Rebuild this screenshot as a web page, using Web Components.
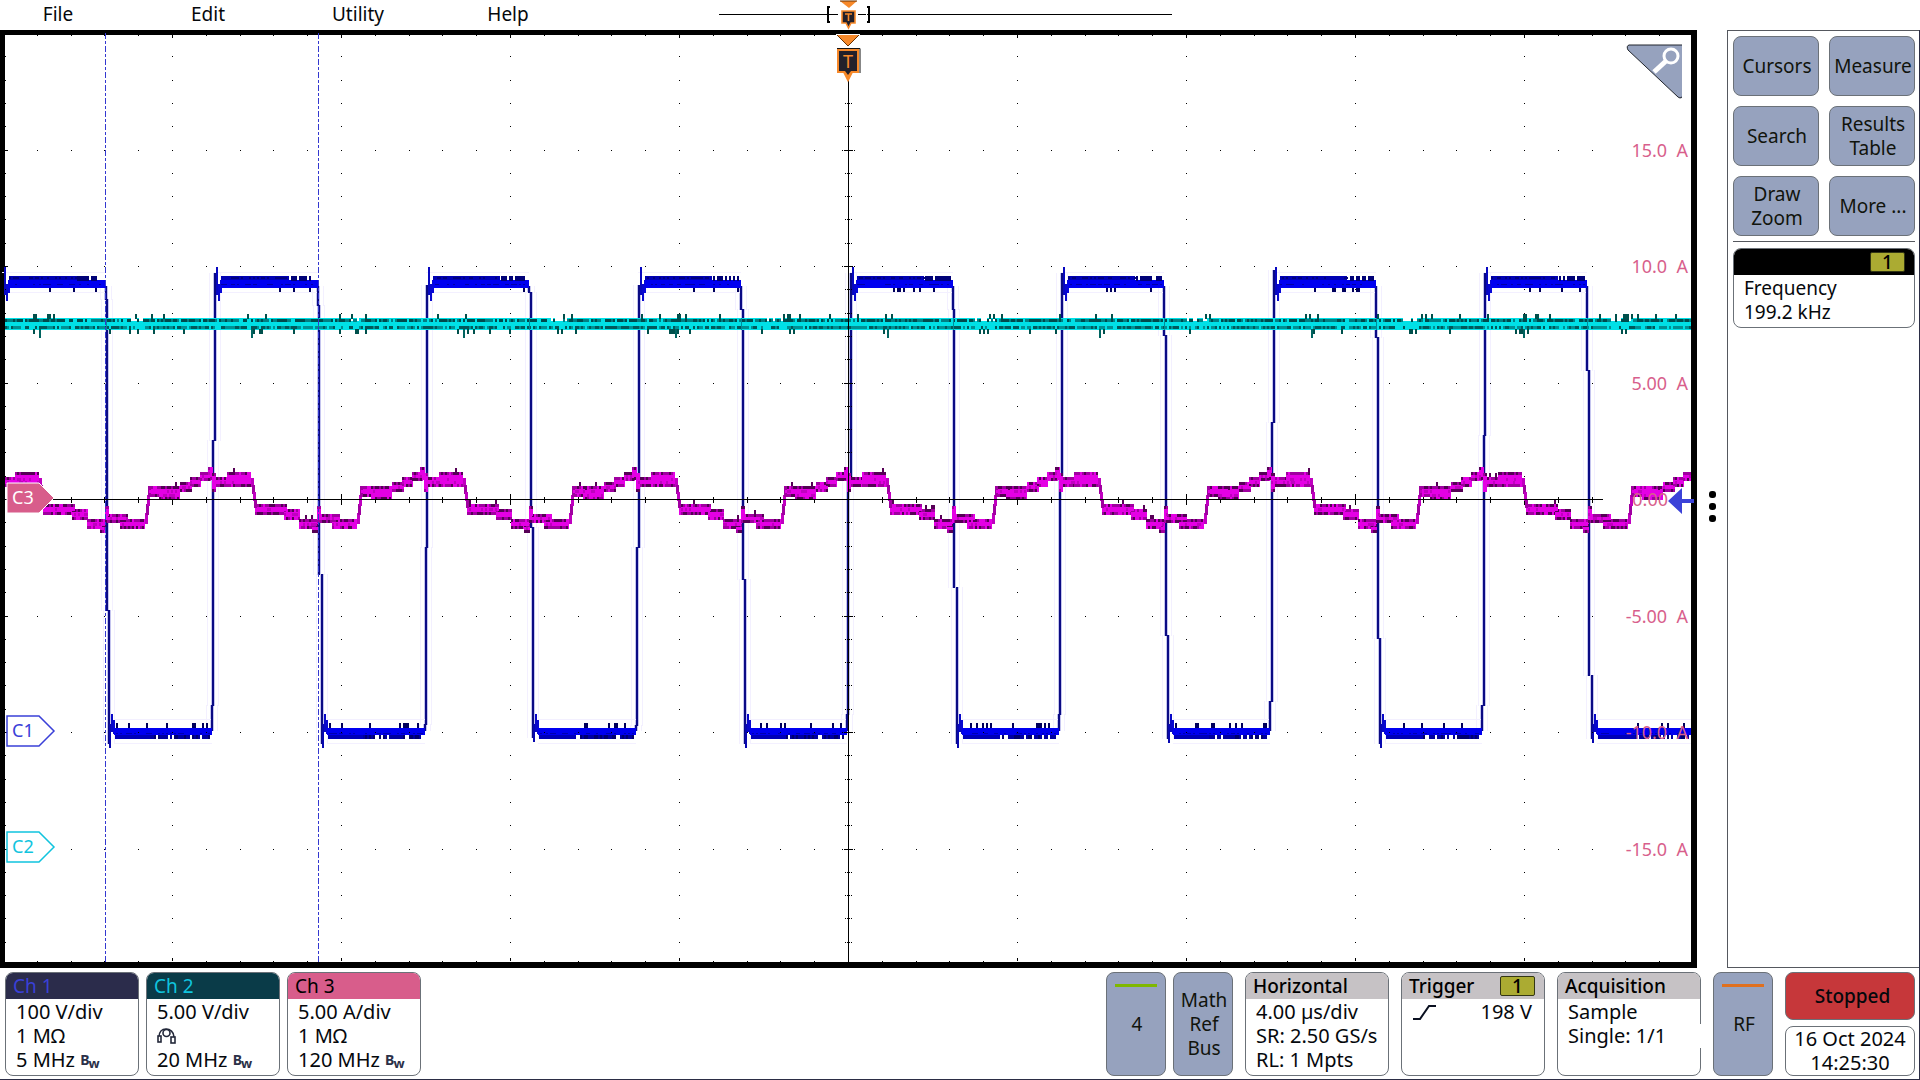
<!DOCTYPE html>
<html lang="en">
<head>
<meta charset="utf-8">
<title>Oscilloscope</title>
<style>
html,body{margin:0;height:100%;background:#fff}
body{font-family:"Noto Sans",sans-serif;font-size:20px;line-height:24px;color:#05080c}
</style>
</head>
<body>
<scope-app>
  <scope-menu slot="menu"></scope-menu>
  <scope-plot slot="plot"></scope-plot>
  <scope-panel slot="panel">
    <tool-button>Cursors</tool-button>
    <tool-button>Measure</tool-button>
    <tool-button>Search</tool-button>
    <tool-button>Results<br>Table</tool-button>
    <tool-button>Draw<br>Zoom</tool-button>
    <tool-button>More ...</tool-button>
    <info-badge slot="cards" style="--head:#000;--narrow:19px"><source-chip slot="chip">1</source-chip><div>Frequency</div><div>199.2 kHz</div></info-badge>
  </scope-panel>
  <info-badge slot="channels" style="--head:#2b2c4b;--title:#3a40d8"><span slot="title">Ch 1</span><div>100 V/div</div><div>1 MΩ</div><div>5 MHz <bw-mark></bw-mark></div></info-badge>
  <info-badge slot="channels" style="--head:#0a3b48;--title:#10c4de"><span slot="title">Ch 2</span><div>5.00 V/div</div><div><probe-icon></probe-icon></div><div>20 MHz <bw-mark></bw-mark></div></info-badge>
  <info-badge slot="channels" style="--head:#d85d8b"><span slot="title">Ch 3</span><div>5.00 A/div</div><div>1 MΩ</div><div>120 MHz <bw-mark></bw-mark></div></info-badge>
  <add-button slot="adders" color="#7fb800">4</add-button>
  <add-button slot="adders">Math Ref Bus</add-button>
  <info-badge slot="status" style="--head:#c6c2c5;--weight:500"><span slot="title">Horizontal</span><div>4.00 µs/div</div><div>SR: 2.50 GS/s</div><div>RL: 1 Mpts</div></info-badge>
  <info-badge slot="status" style="--head:#c6c2c5;--weight:500"><span slot="title">Trigger</span><source-chip slot="chip">1</source-chip><slope-row>198 V</slope-row></info-badge>
  <info-badge slot="status" style="--head:#c6c2c5;--weight:500" class="notched"><span slot="title">Acquisition</span><div>Sample</div><div>Single: 1/1</div></info-badge>
  <add-button slot="rf" color="#e0701e">RF</add-button>
  <run-state slot="clock"><span>16 Oct 2024</span><span slot="time">14:25:30</span></run-state>
</scope-app>
<script>
const define = (name, html, setup) => {
  const tpl = document.createElement('template');
  tpl.innerHTML = html;
  customElements.define(name, class extends HTMLElement {
    constructor() {
      super();
      this.attachShadow({mode: 'open'}).appendChild(tpl.content.cloneNode(true));
    }
    connectedCallback() { if (setup) setup(this, this.shadowRoot); }
  });
};

define('scope-app', `
<style>
:host{display:flex;flex-direction:column;min-height:100vh;box-sizing:border-box;border-bottom:1px solid #2b2d45}
main{flex:1;display:flex;border-right:1px solid #2b2d45;min-height:400px}
.plot{flex:1;display:flex;min-width:0}
.more{width:30px;display:flex;flex-direction:column;align-items:center;justify-content:center;gap:5px;background:none;border:0;padding:15px 0 0}
.more i{width:7px;height:7px;border-radius:3px;background:#000}
.panel{display:flex;width:192px}
footer{display:flex;padding:4px 4px 3px 5px;height:104px;border-right:1px solid #2b2d45}
.ch,.add{display:flex;gap:7px}
.add{margin-left:auto}
.st{display:flex;gap:12px;margin:0 12px}
.ch{--w:134px}.st{--w:144px}
.clock{display:flex;margin-left:12px}
::slotted(scope-plot),::slotted(scope-panel){flex:1;min-width:0}
</style>
<slot name="menu"></slot>
<main><div class="plot"><slot name="plot"></slot></div>
<button class="more" aria-label="Panel handle"><i></i><i></i><i></i></button>
<div class="panel"><slot name="panel"></slot></div></main>
<footer><div class="ch"><slot name="channels"></slot></div><div class="add"><slot name="adders"></slot></div>
<div class="st"><slot name="status"></slot></div><slot name="rf"></slot><div class="clock"><slot name="clock"></slot></div></footer>`);

define('scope-menu', `
<style>
:host{display:flex;height:30px}
nav{display:flex;align-items:flex-start;margin-left:-17px}
button{width:150px;height:28px;padding:0;border:0;background:none;font:inherit;font-size:19px;line-height:28px;color:inherit}
svg{display:block;margin-left:136px}
</style>
<nav><button>File</button><button>Edit</button><button>Utility</button><button>Help</button></nav>
<svg width="453" height="30" viewBox="719 0 453 30">
<rect x="719" y="14" width="453" height="1" shape-rendering="crispEdges"/>
<rect x="830" y="12" width="37" height="5" fill="#fff"/><rect x="830" y="14" width="8" height="1"/><rect x="858" y="14" width="8" height="1"/>
<path d="M830 7h-2v15h2M867 7h2v15h-2" fill="none" stroke="#000" stroke-width="2"/>
<path d="M840 1h17l-8 7z" fill="#f7892a"/><path d="M840 1h17" stroke="#6b3200"/>
<path d="M842 11h13v12h-4l-2.500 5l-2.500-5h-4z" fill="#23202a" stroke="#f7892a" stroke-width="1.6"/>
<path d="M845 14h7M848.500 14v7" stroke="#f7892a" stroke-width="1.6"/>
</svg>`);

define('tool-button', `
<style>
:host{display:flex;height:60px;min-width:0}
button{flex:1;min-width:0;padding:0 0 0 2px;border:1px solid #6b7178;border-radius:8px;background:#96a2be;font:inherit;font-size:19px;line-height:24px;color:#11140c;white-space:nowrap}
</style><button><slot></slot></button>`);

define('scope-panel', `
<style>
:host{display:block;border:1px solid #55585e;border-right:0;padding:5px 4px 0 5px}
.grid{display:grid;grid-template-columns:minmax(0,1fr) minmax(0,1fr);gap:10px}
hr{border:0;border-top:1px solid #55585e;margin:5px 0 6px}
::slotted(info-badge){height:80px}
</style>
<div class="grid"><slot></slot></div><hr><slot name="cards"></slot>`);

define('info-badge', `
<style>
:host{display:flex;flex-direction:column;box-sizing:border-box;width:var(--w,auto);border:1px solid #6b7178;border-radius:8px;background:#fff;font-size:var(--narrow,20px);position:relative}
header{display:flex;justify-content:space-between;align-items:center;height:26px;flex:none;background:var(--head);border-radius:7px 7px 0 0;color:var(--title,#000);padding:0 9px 0 7px;font-weight:var(--weight,400);font-size:19px}
.body{padding:1px 10px 0;white-space:nowrap}
:host(.notched)::after{content:"";position:absolute;right:-1px;top:51px;width:1px;height:24px;background:#fff}
</style>
<header><span><slot name="title"></slot></span><slot name="chip"></slot></header><div class="body"><slot></slot></div>`);

define('source-chip', `
<style>:host{display:block;box-sizing:border-box;width:35px;height:20px;border:1px solid #333614;border-radius:2px;background:#abab32;color:#000;text-align:center;font-size:19px;line-height:18px;font-weight:500}</style><slot></slot>`);

define('bw-mark', `
<style>:host{display:inline-flex;vertical-align:2px;font-size:14px;line-height:14px;font-weight:700;color:#2b3048}
sub{font-size:13px;line-height:14px;vertical-align:baseline;padding-top:3px;margin:0 0 -3px -1px}</style><span>B</span><sub>w</sub>`);

define('probe-icon', `
<style>:host{display:flex;align-items:center;height:24px}</style>
<svg width="20" height="16" viewBox="0 0 20 16" fill="none" stroke="#23283a" stroke-width="1.6">
<path d="M2 9C2 4 5 1 9 1s8 3 8 8"/><circle cx="9.500" cy="5" r="3.500"/><rect x="1" y="8" width="3" height="6" fill="#fff"/><rect x="14" y="9" width="4" height="6" fill="#fff"/></svg>`);

define('slope-row', `
<style>:host{display:flex;justify-content:space-between;padding-right:2px}</style>
<svg width="24" height="24" viewBox="0 0 24 24" fill="none" stroke="#0a1020" stroke-width="2"><path d="M1 19h7L17 6h7"/></svg><span><slot></slot></span>`);

define('add-button', `
<style>
:host{display:flex;width:60px}
button{flex:1;min-width:0;box-sizing:border-box;position:relative;padding:0 1px 0 3px;border:1px solid #6b7178;border-radius:8px;background:#96a2be;font:inherit;font-size:19px;line-height:24px;color:#11140c}
i{position:absolute;left:8px;right:8px;top:11px;height:3px}
</style><button><i></i><slot></slot></button>`, (el, root) => {
  root.querySelector('i').style.background = el.getAttribute('color') || 'none';
});

define('run-state', `
<style>
:host{display:flex;flex-direction:column;gap:6px;width:130px}
button,.date{box-sizing:border-box;border:1px solid #6b7178;border-radius:8px}
button{height:49px;background:#c6373a;font:inherit;font-size:19px;font-weight:500;color:#05080c;padding:0 0 0 5px}
.date{flex:1;text-align:center;line-height:24px;font-size:20px;white-space:nowrap}
</style><button>Stopped</button><div class="date"><slot></slot><br><slot name="time"></slot></div>`);

/* Trace drawing: all coordinates are in the plot's own 1697 x 968 space. */
const random = seed => () => (seed = (seed * 1664525 + 1013904223) >>> 0) / 4294967296;
const rect = (x, y, w, h, f) => `<rect x="${x}" y="${y}" width="${w}" height="${h}" fill="${f}"/>`;

function graticule() {
  let s = '';
  for (let i = 0; i <= 10; i++) for (let j = 0; j < 5; j++) {
    const x = Math.round(3 + i * 169 + j * 33.8);
    if (x > 1690 || x < 5) continue;
    for (let k = 0; k <= 8; k++) {
      const y = Math.round(33 + k * 116.5);
      if (k === 0) s += rect(x, 35, 1, j ? 1 : 3, '#000');
      else if (k === 8) s += rect(x, j ? 961 : 958, 1, j ? 1 : 3, '#000');
      else if (k !== 4 && x < 1600) s += rect(x, y, 1, 1, '#000');
    }
    if (x < 1603) s += rect(x, j ? 497 : 494, 1, j ? 6 : 11, '#000');
  }
  for (let k = 0; k < 40; k++) {
    const y = Math.round(33 + k * 23.3);
    if (y < 36) continue;
    for (let i = 1; i < 10; i++) s += rect(3 + i * 169, y, 1, 1, '#000');
    s += rect(5, y, k % 5 ? 1 : 3, 1, '#000');
    if (y > 82) s += k % 5
      ? rect(845, y, 1, 1, '#000') + rect(847, y, 3, 1, '#000') + rect(851, y, 1, 1, '#000')
      : rect(842, y, 1, 1, '#000') + rect(844, y, 9, 1, '#000') + rect(854, y, 1, 1, '#000');
  }
  return s;
}

const falls = [[105,300,106,611,108,748],[317,306,318,575,321,748],[528,293,530,528,532,742],[740,310,742,580,744,748],[952,310,953,588,956,748],[1163,336,1165,636,1167,743],[1375,338,1377,639,1379,748],[1586,371,1588,676,1591,743]];
const rises = [[211,705,212,440,214,270],[424,724,425,547,426,300],[635,725,636,547,638,297],[846,714,847,480,850,270],[1058,714,1059,475,1061,270],[1269,701,1271,422,1273,267],[1481,705,1483,435,1484,270]];
const NAVY = '#0a0a84', BLUE = '#0000f0', HALO = '#f3f0ff';

function channel1() {
  const r = random(7); let halo = '', s = '';
  const vert = (x, a, b) => { s += rect(x, a, 2, b - a, NAVY); halo += rect(x - 1, a, 4, b - a, '#c4c4ee') + rect(x - 5, a, 1, b - a, HALO) + rect(x + 6, a, 1, b - a, HALO); };
  falls.forEach(f => { vert(f[0], 286, f[1]); vert(f[2], f[1] - 1, f[3]); vert(f[4], f[3] - 1, f[5] - 4);
    s += rect(f[4] + 1, 724, 2, f[5] - 724, '#0808b0') + rect(f[4] + 3, 714, 2, 18, '#0808c8') + rect(f[4] + 5, 720, 2, 14, '#0808d0'); });
  rises.forEach(f => { vert(f[0], f[1], 731); vert(f[2], f[3], f[1] + 1); vert(f[4], Math.min(f[5] + 3, 285), f[3] + 1); });
  [2].concat(rises.map(f => f[4])).forEach((x, i) => {
    s += rect(x + 2, 267, 2, 28, '#0808c0') + rect(x + 4, 284, 2, 17, '#0808d0') + rect(x + 6, 280, 2, 13, '#0808d8');
    const end = falls[i][0] + 1;
    halo += rect(x, 272, end - x, 1, HALO) + rect(x + 6, 292, end - x - 6, 1, HALO);
    s += rect(x + 7, 280, end - x - 7, 8, BLUE) + rect(x + 7, 276, end - x - 36, 4, '#0000b4');
    for (let q = x + 7; q < end - 3; q += 2) {
      if (q > end - 30) { if (r() < .7) s += rect(q, 276, 2, 5, '#000078'); }
      else if (r() < .45) s += rect(q, 277, 2, 2, '#000080');
      if (r() < .4) s += rect(q, 284, 2, 1, '#0000a8');
      if (q > x + 40 && r() < .16) s += rect(q, 288, 2, 4, '#00005c');
    }
  });
  falls.forEach((f, i) => {
    const x = f[4] + 6, end = i < 7 ? rises[i][0] + 1 : 1691;
    halo += rect(x, 719, end - x, 1, HALO) + rect(x, 743, end - x, 1, HALO);
    s += rect(x, 728, end - x, 7, BLUE) + rect(x + 1, 735, 37, 4, '#0000b8');
    for (let q = x + 2; q < end - 3; q += 2) {
      if (q > x + 34 && r() < .75) s += rect(q, 735, 2, 4, r() < .6 ? '#0000a0' : '#000070');
      if (r() < .4) s += rect(q, 733, 2, 1, '#0000b0');
      if (r() < .17) s += rect(q, 723, 2, 5, '#00005c');
    }
  });
  return halo + s;
}

function channel2() {
  const r = random(21); let s = rect(5, 318, 1686, 12, '#00e0e6');
  for (let x = 5; x < 1691; x += 2) {
    const ph = ((x - 214) % 212 + 212) % 212, gap = ph > 124 && ph < 145;
    if (r() < (gap ? .6 : .85)) s += rect(x, 319, 2, 3, r() < .6 ? '#004a4c' : '#008084');
    else if (gap) s += rect(x, 318, 2, 3, '#fff');
    if (r() < (gap ? .3 : .8)) s += rect(x, 326, 2, 3, r() < .5 ? '#005a5c' : '#009094');
    const near = (ph > 30 && ph < 52) || (ph > 136 && ph < 152);
    if (r() < (near ? .3 : .03)) s += rect(x, 314, 2, 5, '#00504c');
    if (r() < (near || gap ? .22 : .02)) s += rect(x, 329, 2, 5, '#00504c');
    if (ph > 36 && ph < 39) s += rect(x, 329, 2, 9, '#006460');
  }
  return s;
}

const shape = [[-2,473,4,19],[2,477,35,10],[13,472,24,15],[41,504,32,11],[70,509,16,11],[85,519,19,10],[98,524,6,9],[103,506,4,17],[106,514,20,9],[118,519,25,10],[147,486,31,11],[157,490,21,10],[178,482,12,10],[188,477,11,10],[198,472,11,9],[206,467,5,13]];
function channel3() {
  const r = random(5); let s = '', t = '';
  const M = '#e400e4', D = '#560056', P = '#a000a0';
  for (let n = -1; n <= 7; n++) {
    const R = Math.round(214 + 211.8 * n);
    shape.forEach(([dx, y, w, h]) => {
      let x = R + dx; if (x < 5) { w -= 5 - x; x = 5; } if (x + w > 1691) w = 1691 - x;
      if (w <= 0) return;
      s += rect(x, y, w, h, M);
      for (let q = x; q < x + w - 1; q += 2) {
        if (r() < .8) s += rect(q, y, 2, 3, r() < .5 ? D : P);
        if (r() < .8) s += rect(q, y + h - 3, 2, 3, r() < .5 ? D : P);
        if (w > 15 && r() < .05) s += rect(q, y - 4, 2, 4, D);
        if (h > 8) t += rect(q, y + Math.floor(h / 2) - 1, 2, 3, r() < .2 ? '#c000c0' : M);
      }
    });
    if (R + 37 > 5 && R + 41 < 1691) for (let k = 0; k < 4; k++) s += rect(R + 37 + k, 478 + k * 7, 3, 9, k % 2 ? P : '#c000c0');
    if (R + 143 > 5 && R + 147 < 1691) for (let k = 0; k < 4; k++) s += rect(R + 143 + k, 513 - k * 9, 3, 11, k % 2 ? P : '#c000c0');
  }
  return s + t;
}

define('scope-plot', `
<style>
:host{display:block;position:relative;border:solid #000;border-width:5px 6px 6px 5px;background:#fff}
.trace{position:absolute;inset:0;width:100%;height:100%;overflow:visible}
text{font-family:"Noto Sans",sans-serif}
.scale{position:absolute;inset:-2px 3px -3px auto;display:grid;grid-template-rows:1fr repeat(7,2fr) 1fr;text-align:right;color:#d85f8c;font-size:18px;align-items:center;white-space:pre}
.scale .zero{padding-right:20px}
.zoom{position:absolute;top:9px;right:8px;width:57px;height:56px;padding:0;border:0;background:none}
.zoom svg{display:block}
</style>
<svg class="trace" viewBox="5 35 1686 927" preserveAspectRatio="none"></svg>
<div class="scale"><span></span><span>15.0  A</span><span>10.0  A</span><span>5.00  A</span><span class="zero">0.00</span><span>-5.00  A</span><span>-10.0  A</span><span>-15.0  A</span><span></span></div>
<svg class="trace" viewBox="5 35 1686 927" preserveAspectRatio="none"><path d="M1668 501l14-13v11h12v4h-12v11z" fill="#3b42d8"/></svg>
<button class="zoom" aria-label="Zoom"><svg width="57" height="56" viewBox="0 0 57 56"><path d="M3 1H56V54Q54 55 52 53L2 6Q0 2 3 1z" fill="#96a2be"/><path d="M56 1H3Q0 2 2 6L52 53Q54 55 56 53" fill="none" stroke="#20242c"/><path d="M40 17L28 28" stroke="#fff" stroke-width="5"/><circle cx="45" cy="12" r="7" fill="#96a2be" stroke="#fff" stroke-width="3"/></svg></button>`,
(el, root) => {
  const tag = (y, color, fill, ink, name) => `<path d="M7 ${y - 15}h32l15 15l-15 15H7z" fill="${fill}" stroke="${color}" stroke-width="${fill === '#fff' ? 1.5 : 1}"/><text x="12" y="${y + 6}" font-size="18" fill="${ink}">${name}</text>`;
  root.querySelector('.trace').innerHTML =
    `<g shape-rendering="crispEdges">${channel1()}${graticule()}${channel3()}${channel2()}` +
    falls.map(f => rect(f[0] + 1, 318, 1, 12, '#008c9c')).join('') +
    rect(5, 499, 1598, 1, '#000') + rect(848, 80, 1, 882, '#000') +
    `<path d="M105.500 33V964M318.500 33V964" stroke="#3338d0" stroke-dasharray="6 2 3 2" fill="none"/></g>` +
    tag(498, '#fff', '#d85d8b', '#fff', 'C3') + tag(731, '#3a40d8', '#fff', '#3a40d8', 'C1') + tag(847, '#10c4de', '#fff', '#10c4de', 'C2') +
    `<path d="M836 34.500h24" stroke="#fff"/><path d="M837 35h22l-11 11z" fill="#f7892a"/><path d="M837 35l11 11l11-11" fill="none" stroke="#6b3200" stroke-width="1"/>
     <path d="M838 50h20v22h-6l-4 8l-4-8h-6z" fill="#f7892a" stroke="#f7892a" stroke-width="2"/><path d="M839 51h18v20h-6l-3 4l-3-4h-6z" fill="#23202a"/><path d="M837 48.500h23V73" fill="none" stroke="#111"/>
     <text x="848" y="68" font-size="18" fill="#f7892a" text-anchor="middle">T</text>`;
});
</script>
</body>
</html>
